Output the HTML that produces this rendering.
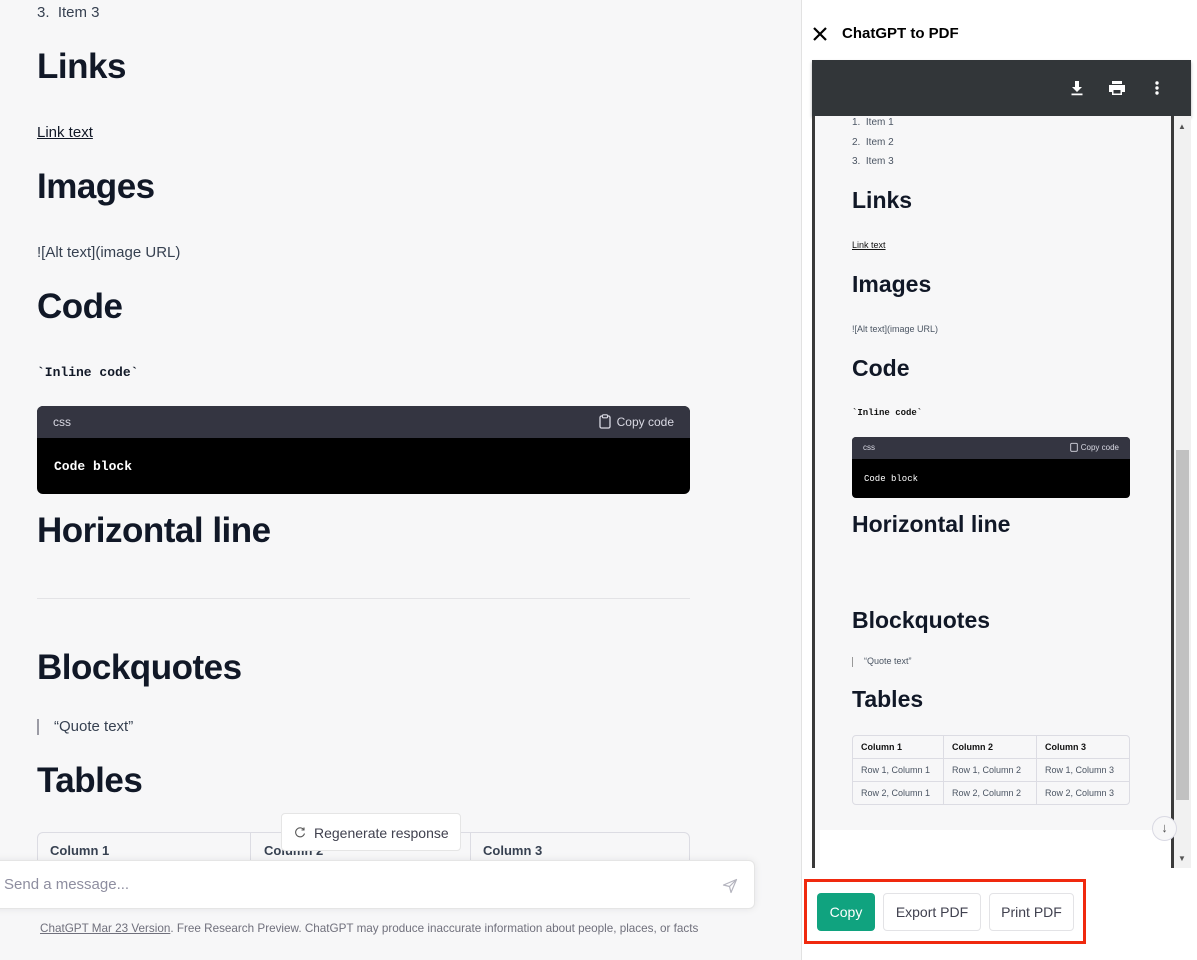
<!DOCTYPE html>
<html><head><meta charset="utf-8"><style>
*{margin:0;padding:0;box-sizing:border-box}
body{width:1197px;height:960px;overflow:hidden;position:relative;background:#f7f7f8;font-family:"Liberation Sans",sans-serif;color:#374151}
.a{position:absolute;white-space:nowrap}
h1{position:absolute;font-size:35px;font-weight:bold;color:#111827;letter-spacing:-0.5px;white-space:nowrap}
.p{font-size:15px;color:#374151}
.mono{font-family:"Liberation Mono",monospace;font-weight:bold}
.sh1{position:absolute;font-size:23px;font-weight:bold;color:#111827;white-space:nowrap;left:852px}
.sm{position:absolute;font-size:10px;color:#4b5563;white-space:nowrap}
table{border-collapse:separate;border-spacing:0}
</style></head><body>
<div class="a p" style="left:37px;top:4px">3.&nbsp; Item 3</div>
<h1 style="left:37px;top:47px">Links</h1>
<div class="a p" style="left:37px;top:124px;text-decoration:underline;color:#111827">Link text</div>
<h1 style="left:37px;top:167px">Images</h1>
<div class="a p" style="left:37px;top:244px">![Alt text](image URL)</div>
<h1 style="left:37px;top:287px">Code</h1>
<div class="a mono" style="left:37px;top:365px;font-size:13px;color:#111827">`Inline code`</div>
<div class="a" style="left:37px;top:406px;width:653px;height:88px;background:#000;border-radius:6px;overflow:hidden">
 <div style="height:32px;background:#343541;color:#d9d9e3;font-size:12px;padding:9px 16px;position:relative">css
  <span style="position:absolute;right:16px;top:8px;font-size:12px">
   <svg width="12" height="15" viewBox="0 0 12 15" style="vertical-align:-3px;margin-right:6px"><rect x="1" y="2" width="10" height="12" rx="1.5" fill="none" stroke="#d9d9e3" stroke-width="1.3"/><rect x="3.5" y="0.8" width="5" height="3" rx="0.8" fill="#343541" stroke="#d9d9e3" stroke-width="1.1"/></svg>Copy code</span></div>
 <div class="mono" style="color:#fff;font-size:13px;padding:21px 17px">Code block</div>
</div>
<h1 style="left:37px;top:511px">Horizontal line</h1>
<div class="a" style="left:37px;top:598px;width:653px;height:1px;background:#e3e3e6"></div>
<h1 style="left:37px;top:648px">Blockquotes</h1>
<div class="a" style="left:37px;top:719px;width:2px;height:16px;background:#9b9ba5"></div>
<div class="a p" style="left:54px;top:718px">“Quote text”</div>
<h1 style="left:37px;top:761px">Tables</h1>
<div class="a" style="left:37px;top:832px;width:653px;height:40px;border:1px solid #dcdce3;border-radius:6px;background:#f7f7f8"></div>
<div class="a" style="left:250px;top:832px;width:1px;height:30px;background:#dcdce3"></div>
<div class="a" style="left:470px;top:832px;width:1px;height:30px;background:#dcdce3"></div>
<div class="a" style="left:50px;top:843px;font-size:13px;font-weight:bold;color:#374151">Column 1</div>
<div class="a" style="left:264px;top:843px;font-size:13px;font-weight:bold;color:#374151">Column 2</div>
<div class="a" style="left:483px;top:843px;font-size:13px;font-weight:bold;color:#374151">Column 3</div>
<div class="a" style="left:281px;top:813px;width:180px;height:38px;background:#fff;border:1px solid #e5e5e5;border-radius:4px;font-size:14px;color:#40414f;padding:11px 0 0 32px">Regenerate response
 <svg width="12" height="12" viewBox="0 0 12 12" style="position:absolute;left:12px;top:12px"><path d="M10 4A4.5 4.5 0 1 0 10.5 7.5M10 1.5V4H7.5" fill="none" stroke="#555" stroke-width="1.1"/></svg></div>
<div class="a" style="left:-10px;top:860px;width:765px;height:49px;background:#fff;border:1px solid #e5e5e5;border-radius:6px;box-shadow:0 0 8px rgba(0,0,0,0.08)"></div>
<div class="a" style="left:4px;top:876px;font-size:15px;color:#8e8ea0">Send a message...</div>
<svg class="a" style="left:722px;top:878px" width="16" height="16" viewBox="0 0 16 16"><path d="M1.5 7L14.5 1.5 9 14.5 7.5 8.5z M7.5 8.5L14.5 1.5" fill="none" stroke="#b4b4be" stroke-width="1.2" stroke-linejoin="round"/></svg>
<div class="a" style="left:40px;top:922px;font-size:11.7px;color:#70707c"><u>ChatGPT Mar 23 Version</u>. Free Research Preview. ChatGPT may produce inaccurate information about people, places, or facts</div>

<div class="a" style="left:801px;top:0;width:396px;height:960px;background:#fff;border-left:1px solid #e2e2e2"></div>
<svg class="a" style="left:812px;top:26px" width="16" height="16" viewBox="0 0 16 16"><path d="M2 2L14 14M14 2L2 14" stroke="#000" stroke-width="2.2"/></svg>
<div class="a" style="left:842px;top:25px;font-size:15px;font-weight:bold;color:#000">ChatGPT to PDF</div>
<div class="a" style="left:812px;top:60px;width:379px;height:808px;background:#fff"></div>
<div class="a" style="left:812px;top:60px;width:379px;height:56px;background:#323639;box-shadow:0 2px 3px rgba(0,0,0,.3)"></div>
<svg class="a" style="left:1069px;top:80px" width="16" height="16" viewBox="0 0 16 16"><path d="M6 1h4v6h3l-5 5-5-5h3z M2.5 13.5h11v1.8h-11z" fill="#fff"/></svg>
<svg class="a" style="left:1108px;top:80px" width="18" height="16" viewBox="0 0 18 16"><path d="M4 1h10v3H4z M1 5h16v7h-3v3H4v-3H1z" fill="#fff"/><rect x="5.5" y="10" width="7" height="3.5" fill="#323639"/></svg>
<svg class="a" style="left:1154px;top:80px" width="6" height="16" viewBox="0 0 6 16"><circle cx="3" cy="3" r="1.7" fill="#fff"/><circle cx="3" cy="8" r="1.7" fill="#fff"/><circle cx="3" cy="13" r="1.7" fill="#fff"/></svg>
<div class="a" style="left:812px;top:116px;width:3px;height:752px;background:#3a3a3a"></div>
<div class="a" style="left:1171px;top:116px;width:3px;height:752px;background:#3a3a3a"></div>
<div class="a" style="left:815px;top:116px;width:356px;height:714px;background:#f7f7f8"></div>
<div class="a" style="left:1174px;top:116px;width:17px;height:752px;background:#f1f1f1"></div>
<div class="a" style="left:1176px;top:450px;width:13px;height:350px;background:#c1c1c1"></div>
<div class="a" style="left:1178px;top:122px;font-size:8px;color:#555">▲</div>
<div class="a" style="left:1178px;top:854px;font-size:8px;color:#555">▼</div>
<div class="sm" style="left:852px;top:117px">1.&nbsp; Item 1</div>
<div class="sm" style="left:852px;top:137px">2.&nbsp; Item 2</div>
<div class="sm" style="left:852px;top:156px">3.&nbsp; Item 3</div>
<div class="sh1" style="top:187px">Links</div>
<div class="sm" style="left:852px;top:240px;font-size:9px;text-decoration:underline;color:#111">Link text</div>
<div class="sh1" style="top:271px">Images</div>
<div class="sm" style="left:852px;top:324px;font-size:9px">![Alt text](image URL)</div>
<div class="sh1" style="top:355px">Code</div>
<div class="sm mono" style="left:852px;top:408px;font-size:9px;color:#111">`Inline code`</div>
<div class="a" style="left:852px;top:437px;width:278px;height:61px;background:#000;border-radius:4px;overflow:hidden">
 <div style="height:22px;background:#343541;color:#d9d9e3;font-size:8px;padding:6px 11px;position:relative">css<span style="position:absolute;right:11px;top:5px"><svg width="8" height="10" viewBox="0 0 8 10" style="vertical-align:-2px;margin-right:3px"><rect x="0.7" y="1.3" width="6.6" height="8" rx="1" fill="none" stroke="#d9d9e3" stroke-width="0.9"/></svg>Copy code</span></div>
 <div style="font-family:'Liberation Mono',monospace;color:#fff;font-size:9px;padding:15px 12px">Code block</div>
</div>
<div class="sh1" style="top:511px">Horizontal line</div>
<div class="sh1" style="top:607px">Blockquotes</div>
<div class="a" style="left:852px;top:657px;width:1px;height:10px;background:#999"></div>
<div class="sm" style="left:864px;top:656px;font-size:9px">“Quote text”</div>
<div class="sh1" style="top:686px">Tables</div>
<table class="a" style="left:852px;top:735px;width:278px;font-size:9px;color:#4b5563;border:1px solid #dcdce3;border-radius:4px">
<tr style="height:23px"><td style="padding-left:8px;font-weight:bold;color:#111;border-right:1px solid #dcdce3;border-bottom:1px solid #dcdce3;width:91px">Column 1</td><td style="padding-left:8px;font-weight:bold;color:#111;border-right:1px solid #dcdce3;border-bottom:1px solid #dcdce3;width:93px">Column 2</td><td style="padding-left:8px;font-weight:bold;color:#111;border-bottom:1px solid #dcdce3">Column 3</td></tr>
<tr style="height:23px"><td style="padding-left:8px;border-right:1px solid #dcdce3;border-bottom:1px solid #dcdce3">Row 1, Column 1</td><td style="padding-left:8px;border-right:1px solid #dcdce3;border-bottom:1px solid #dcdce3">Row 1, Column 2</td><td style="padding-left:8px;border-bottom:1px solid #dcdce3">Row 1, Column 3</td></tr>
<tr style="height:22px"><td style="padding-left:8px;border-right:1px solid #dcdce3">Row 2, Column 1</td><td style="padding-left:8px;border-right:1px solid #dcdce3">Row 2, Column 2</td><td style="padding-left:8px">Row 2, Column 3</td></tr>
</table>
<div class="a" style="left:1152px;top:816px;width:25px;height:25px;border-radius:50%;border:1px solid #d9d9e3;background:#f7f7f8;text-align:center;font-size:13px;line-height:22px;color:#555">↓</div>
<div class="a" style="left:804px;top:879px;width:282px;height:65px;border:3px solid #f0290e"></div>
<div class="a" style="left:817px;top:893px;width:58px;height:38px;background:#10a37f;border-radius:4px;color:#fff;font-size:14px;text-align:center;line-height:38px">Copy</div>
<div class="a" style="left:883px;top:893px;width:98px;height:38px;background:#fff;border:1px solid #e3e3e6;border-radius:4px;color:#40414f;font-size:14px;text-align:center;line-height:36px">Export PDF</div>
<div class="a" style="left:989px;top:893px;width:85px;height:38px;background:#fff;border:1px solid #e3e3e6;border-radius:4px;color:#40414f;font-size:14px;text-align:center;line-height:36px">Print PDF</div>
</body></html>
